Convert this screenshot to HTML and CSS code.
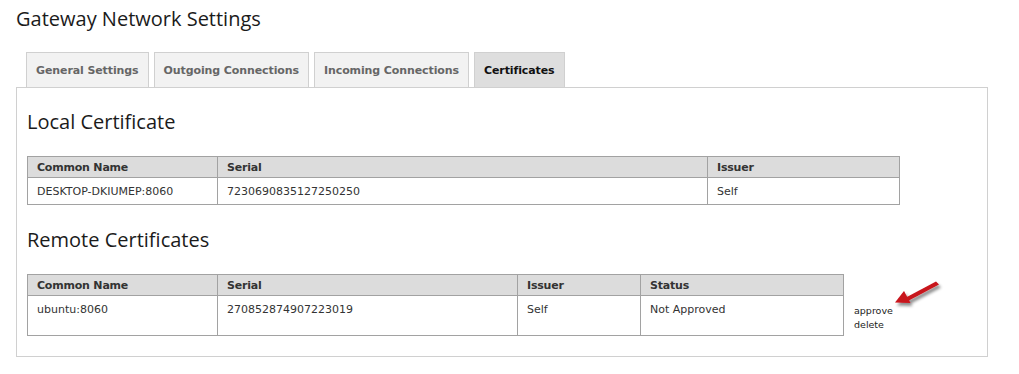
FILE: index.html
```html
<!DOCTYPE html>
<html lang="en">
<head>
    <meta charset="UTF-8">
    <title>Gateway Network Settings</title>
    <link rel="stylesheet" href="styles.css">
</head>
<body>
    <div class="page">
        <h1 class="page-title">Gateway Network Settings</h1>

        <ul class="tabs">
            <li class="tab">General Settings</li>
            <li class="tab">Outgoing Connections</li>
            <li class="tab">Incoming Connections</li>
            <li class="tab active">Certificates</li>
        </ul>

        <div class="panel">
            <h2 class="section-title">Local Certificate</h2>
            <table class="cert-table local">
                <thead>
                    <tr>
                        <th class="col-name">Common Name</th>
                        <th class="col-serial">Serial</th>
                        <th>Issuer</th>
                    </tr>
                </thead>
                <tbody>
                    <tr>
                        <td>DESKTOP-DKIUMEP:8060</td>
                        <td>7230690835127250250</td>
                        <td>Self</td>
                    </tr>
                </tbody>
            </table>

            <h2 class="section-title">Remote Certificates</h2>
            <table class="cert-table remote">
                <thead>
                    <tr>
                        <th class="col-name">Common Name</th>
                        <th class="col-serial">Serial</th>
                        <th class="col-issuer">Issuer</th>
                        <th class="col-status">Status</th>
                        <th class="actions"></th>
                    </tr>
                </thead>
                <tbody>
                    <tr>
                        <td>ubuntu:8060</td>
                        <td>270852874907223019</td>
                        <td>Self</td>
                        <td>Not Approved</td>
                        <td class="actions">
                            <a href="#">approve</a>
                            <a href="#">delete</a>
                        </td>
                    </tr>
                </tbody>
            </table>
        </div>

        <!-- annotation arrow pointing at the approve link -->
        <svg class="pointer" width="60" height="40" viewBox="0 0 60 40">
            <defs>
                <filter id="shadow" x="-30%" y="-30%" width="160%" height="160%">
                    <feDropShadow dx="2" dy="3" stdDeviation="1.6" flood-color="#000" flood-opacity="0.45"/>
                </filter>
            </defs>
            <g filter="url(#shadow)" fill="#c8141b" stroke="none">
                <path d="M46 5.5 L49 8.5 L17 25.5 L15 22 Z"/>
                <path d="M5 26.5 L14 15 L20.5 27 Z"/>
            </g>
        </svg>
    </div>
</body>
</html>
```

FILE: styles.css
```css
* {
    margin: 0;
    padding: 0;
    box-sizing: border-box;
}

body {
    font-family: 'DejaVu Sans', Verdana, sans-serif;
    font-size: 11px;
    color: #333;
    background: #fff;
}

.page {
    position: relative;
    padding: 8px 31px 0 16px;
}

.page-title {
    font-family: 'Open Sans', 'Noto Sans', sans-serif;
    font-weight: normal;
    font-size: 20px;
    line-height: 22px;
    color: #1b1b1b;
    margin-bottom: 22px;
}

.tabs {
    list-style: none;
    display: flex;
    gap: 5px;
    padding-left: 10px;
}

.tab {
    height: 35px;
    padding: 0 9px;
    display: flex;
    align-items: center;
    background: #f2f2f2;
    border: 1px solid #d0d0d0;
    border-bottom: none;
    font-weight: bold;
    color: #666;
    letter-spacing: -0.1px;
}

.tab.active {
    background: #dedede;
    color: #111;
}

.panel {
    border: 1px solid #d0d0d0;
    padding: 20px 10px 20px 10px;
}

.section-title {
    font-family: 'Open Sans', 'Noto Sans', sans-serif;
    font-weight: normal;
    font-size: 20px;
    line-height: 28px;
    color: #1b1b1b;
    margin-bottom: 20px;
}

.cert-table {
    border-collapse: collapse;
    margin-bottom: 21px;
}

.cert-table.local {
    width: 873px;
}

.cert-table.remote {
    margin-bottom: 0;
}

.cert-table th,
.cert-table td {
    border: 1px solid #a2a2a2;
    text-align: left;
    padding: 0 9px;
}

.cert-table th {
    background: #dcdcdc;
    height: 21px;
    font-weight: bold;
    color: #333;
    letter-spacing: -0.2px;
}

.cert-table td {
    height: 27px;
}

.col-name {
    width: 190px;
}

.local .col-serial {
    width: 490px;
}

.remote .col-serial {
    width: 300px;
}

.col-issuer {
    width: 123px;
}

.col-status {
    width: 203px;
}

.remote td {
    height: 40px;
    vertical-align: top;
    padding-top: 7px;
}

.cert-table .actions {
    border: none;
    background: none;
    width: 60px;
    padding: 8px 0 0 10px;
    font-size: 9.5px;
    line-height: 14px;
}

.actions a {
    display: block;
    color: #222;
    text-decoration: none;
}

.pointer {
    position: absolute;
    left: 890px;
    top: 276px;
}
```
